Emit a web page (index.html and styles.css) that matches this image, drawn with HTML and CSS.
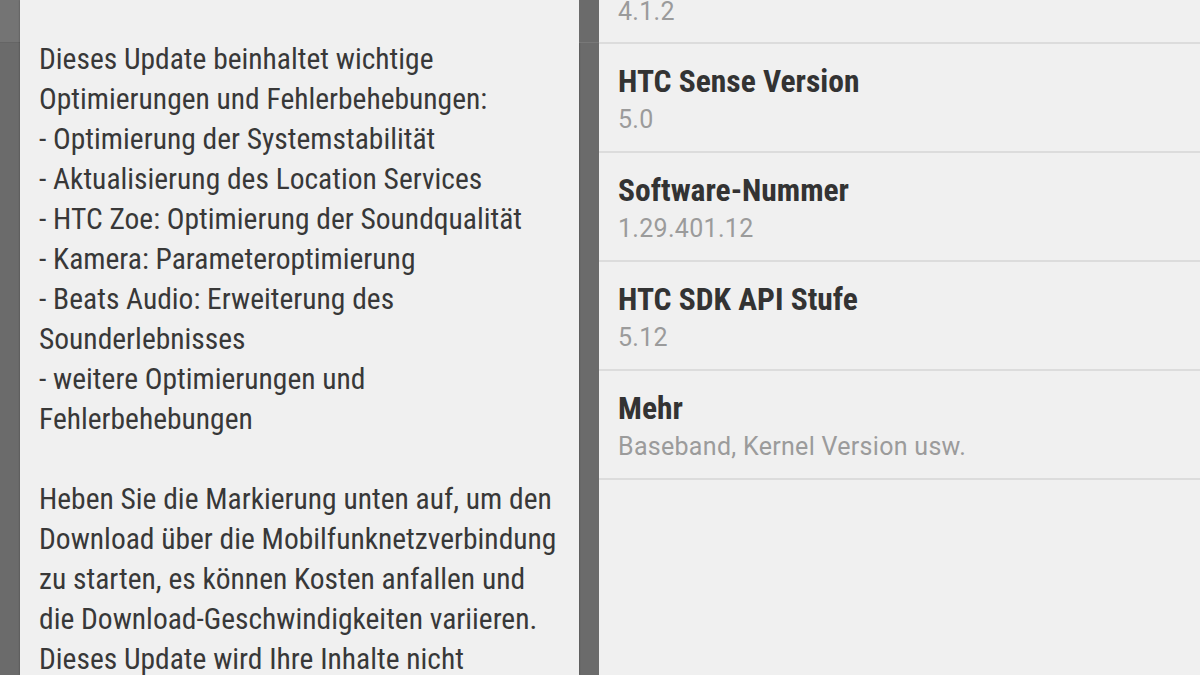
FILE: index.html
```html
<!DOCTYPE html>
<html lang="de">
<head>
    <meta charset="UTF-8">
    <meta name="viewport" content="width=device-width, initial-scale=1.0">
    <title>Software-Update</title>
    <link rel="stylesheet" href="styles.css">
</head>
<body>
    <main class="screens">
        <!-- left phone: update dialog over dimmed settings -->
        <section class="phone phone-dimmed">
            <div class="gutter">
                <div class="gutter-top"></div>
            </div>
            <div class="dialog">
                <p>Dieses Update beinhaltet wichtige Optimierungen und Fehlerbehebungen:<br>
                - Optimierung der Systemstabilität<br>
                - Aktualisierung des Location Services<br>
                - HTC Zoe: Optimierung der Soundqualität<br>
                - Kamera: Parameteroptimierung<br>
                - Beats Audio: Erweiterung des Sounderlebnisses<br>
                - weitere Optimierungen und Fehlerbehebungen</p>
                <p>Heben Sie die Markierung unten auf, um den Download über die Mobilfunknetzverbindung zu starten, es können Kosten anfallen und die Download-Geschwindigkeiten variieren. Dieses Update wird Ihre Inhalte nicht</p>
            </div>
            <div class="gutter gutter-right">
                <div class="gutter-top"></div>
            </div>
        </section>

        <!-- right phone: settings list (scrolled, first row cut at the top) -->
        <section class="phone phone-settings">
            <ul class="settings">
                <li class="item item-partial">
                    <div class="item-sub">4.1.2</div>
                </li>
                <li class="item">
                    <div class="item-title">HTC Sense Version</div>
                    <div class="item-sub">5.0</div>
                </li>
                <li class="item">
                    <div class="item-title">Software-Nummer</div>
                    <div class="item-sub">1.29.401.12</div>
                </li>
                <li class="item">
                    <div class="item-title">HTC SDK API Stufe</div>
                    <div class="item-sub">5.12</div>
                </li>
                <li class="item">
                    <div class="item-title">Mehr</div>
                    <div class="item-sub">Baseband, Kernel Version usw.</div>
                </li>
            </ul>
        </section>
    </main>
</body>
</html>
```
FILE: styles.css
```css
html, body {
    margin: 0;
    padding: 0;
    height: 100%;
    overflow: hidden;
}
body {
    font-family: Roboto, "Noto Sans", sans-serif;
    background: #f0f0f0;
}
.screens {
    display: flex;
    height: 675px;
}
.phone {
    height: 100%;
    overflow: hidden;
}

/* dimmed backdrop with dialog */
.phone-dimmed {
    width: 599px;
    display: flex;
    background: #6b6b6b;
}
.gutter {
    width: 20px;
    flex-shrink: 0;
}
.gutter-top {
    height: 42px;
    background: #747474;
    border-bottom: 1px solid #656565;
}
.gutter-right .gutter-top {
    background: #6b6b6b;
    border-bottom: 1px solid #787878;
}
.dialog {
    flex: 1;
    background: #f0f0f0;
    box-shadow: 0 0 2px rgba(0, 0, 0, 0.35);
    padding: 39px 18px 0 19px;
    font-family: "Roboto Condensed", Roboto, sans-serif;
    font-size: 29.5px;
    line-height: 40px;
    color: #383838;
}
.dialog p {
    margin: 0 0 40px;
}

/* settings list */
.phone-settings {
    flex: 1;
    background: #f0f0f0;
}
.settings {
    list-style: none;
    margin: 0;
    padding: 0;
}
.item {
    padding: 20px 18px 11px 19px;
    border-bottom: 2px solid #dcdcdc;
}
.item-partial {
    padding-top: 0;
    padding-bottom: 18px;
}
.item-partial .item-sub {
    line-height: 24px;
}
.item-title {
    font-family: "Roboto Condensed", Roboto, sans-serif;
    font-weight: bold;
    font-size: 31.5px;
    line-height: 36px;
    color: #333;
}
.item-sub {
    font-size: 25px;
    letter-spacing: 0.3px;
    line-height: 40px;
    color: #9b9b9b;
}
```
